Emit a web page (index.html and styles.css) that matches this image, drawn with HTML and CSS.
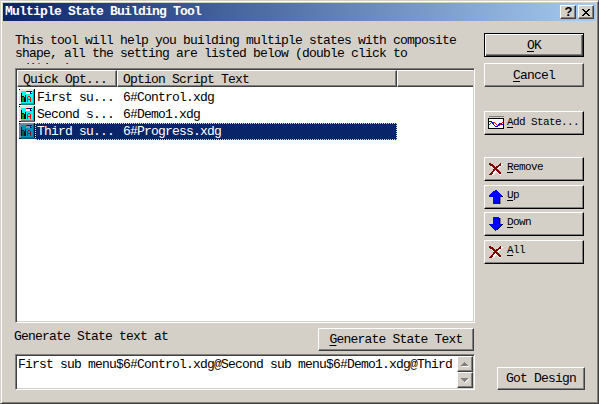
FILE: index.html
```html
<!DOCTYPE html>
<html lang="en">
<head>
  <meta charset="UTF-8">
  <title>Multiple State Building Tool</title>
  <link rel="stylesheet" href="styles.css">
</head>
<body>
  <svg class="defs" width="0" height="0">
    <symbol id="item" viewBox="0 0 16 16">
      <rect width="16" height="16" fill="#e8e4d8"/>
      <path d="M0 0h1v1H0zM0 15h2v1H0zM15 0h1v15h-1z" fill="#000"/>
      <path d="M14 1h1v13h-1zM2 14h13v1H2z" fill="#808080"/>
      <path d="M2 15h14v1H2z" fill="#008080"/>
      <path d="M2 2h12v12H2z" fill="#0ff"/>
      <path d="M2 4h1v9H2zM3 7h2v1H3zM5 8h1v5H5zM6 6h1v7H6z" fill="#000"/>
      <path d="M3 8h2v5H3z" fill="#00a000"/>
      <path d="M7 2h6v3H7z" fill="#fff"/>
      <path d="M8 2h5v1h-1v2h-1V3H8z" fill="#000080"/>
      <path d="M7 2h1v1H7zM12 4h1v1h-1zM9 7h2v1h1v5h-1v-2H9v2H8V8h1zM9 8v2h2V8z" fill="#f00" fill-rule="evenodd"/>
    </symbol>
    <symbol id="cross" viewBox="0 0 16 16">
      <path d="M3 4l10 10M14 3L4 14" fill="none" stroke="#fff" stroke-width="2"/>
      <path d="M1 3l3 1 9 9M13 3L8 7 2 14" fill="none" stroke="#800000" stroke-width="2"/>
    </symbol>
    <symbol id="arrow-up" viewBox="0 0 16 16">
      <path d="M9 2h1v1h1v1h1v1h1v1h1v1h1v1h-3v7H6v-1h5V8h3z" fill="#000"/>
      <path d="M12 8h1v7h-1z" fill="#808080"/>
      <path d="M7 1h2v1h1v1h1v1h1v1h1v1h1v2h-3v7H5V8H1V6h1V5h1V4h1V3h1V2h2z" fill="#00f"/>
    </symbol>
    <symbol id="arrow-down" viewBox="0 0 16 16">
      <path d="M11 2h1v6h3v1h-1v1h-1v1h-1v1h-1v1h-1v1H9v-2h2z" fill="#000"/>
      <path d="M12 2h1v6h-1z" fill="#808080"/>
      <path d="M5 1h6v7h3v1h-1v1h-1v1h-1v1h-1v1H9v1H8v1H7v-1H6v-1H5v-1H4v-1H3v-1H2V9H1V8h4z" fill="#00f"/>
    </symbol>
  </svg>

  <div class="window">
    <div class="titlebar">
      <h1>Multiple State Building Tool</h1>
      <button class="caption-btn help">?</button>
      <button class="caption-btn close">
        <svg width="8" height="7" viewBox="0 0 8 7"><path d="M0 0h2v1h1v1h2V1h1V0h2v1H7v1H6v1H5v1h1v1h1v1h1v1H6V6H5V5H3v1H2v1H0V6h1V5h1V4h1V3H2V2H1V1H0z"/></svg>
      </button>
    </div>

    <div class="content">
      <div class="main">
        <p class="intro">This tool will help you building multiple states with composite<br>shape, all the setting are listed below (double click to <span>editing)</span></p>

        <div class="list">
          <div class="list-header">
            <span>Quick Opt...</span>
            <span>Option Script Text</span>
            <span></span>
          </div>
          <div class="row">
            <svg class="item-icon"><use href="#item"/></svg>
            <div class="cells"><span>First su...</span><span>6#Control.xdg</span></div>
          </div>
          <div class="row">
            <svg class="item-icon"><use href="#item"/></svg>
            <div class="cells"><span>Second s...</span><span>6#Demo1.xdg</span></div>
          </div>
          <div class="row selected">
            <div class="icon-tint"><svg class="item-icon"><use href="#item"/></svg></div>
            <div class="cells"><span>Third su...</span><span>6#Progress.xdg</span></div>
          </div>
        </div>

        <div class="generate">
          <span>Generate State text at</span>
          <button class="btn"><span><u>G</u>enerate State Text</span></button>
        </div>

        <div class="output">
          <div class="output-text">First sub menu$6#Control.xdg@Second sub menu$6#Demo1.xdg@Third</div>
          <div class="scrollbar">
            <button><svg width="8" height="5" viewBox="0 0 8 5"><path d="M1 4h7v1H1z" fill="#fff"/><path d="M3 0h1v1h1v1h1v1h1v1H0V3h1V2h1V1h1z" fill="#808080"/></svg></button>
            <button><svg width="8" height="5" viewBox="0 0 8 5"><path d="M7 1h1v1H7v1H6v1H5v1H4V4h1V3h1V2h1z" fill="#fff"/><path d="M0 0h7v1H6v1H5v1H4v1H3V3H2V2H1V1H0z" fill="#808080"/></svg></button>
          </div>
        </div>
      </div>

      <div class="side">
        <button class="btn default"><span><u>O</u>K</span></button>
        <button class="btn cancel"><span><u>C</u>ancel</span></button>
        <button class="btn tool add">
          <svg width="16" height="14" viewBox="0 0 16 14">
            <path d="M1 0h15v1H1z" fill="#808080"/>
            <path d="M0 2h16v11H0z"/>
            <path d="M1 3h14v9H1z" fill="#fff"/>
            <path d="M1 9l3-3h2l3 3h3l3-3" fill="none" stroke="#f00"/>
            <path d="M1 5h2l4 5h3l2-3 3 2" fill="none" stroke="#00f"/>
          </svg>
          <span><u>A</u>dd State...</span>
        </button>
        <button class="btn tool remove"><svg width="16" height="16"><use href="#cross"/></svg><span><u>R</u>emove</span></button>
        <button class="btn tool up"><svg width="16" height="16"><use href="#arrow-up"/></svg><span><u>U</u>p</span></button>
        <button class="btn tool down"><svg width="16" height="16"><use href="#arrow-down"/></svg><span><u>D</u>own</span></button>
        <button class="btn tool all"><svg width="16" height="16"><use href="#cross"/></svg><span><u>A</u>ll</span></button>
        <button class="btn design"><span>Got Design</span></button>
      </div>
    </div>
  </div>
</body>
</html>
```
FILE: styles.css
```css
* {
  box-sizing: border-box;
}

body {
  margin: 0;
  background: #d4d0c8;
  color: #000;
  font: 13px/13px "Liberation Mono", monospace;
  letter-spacing: -0.8px;
}

svg {
  display: block;
  flex: none;
  shape-rendering: crispEdges;
}

.defs {
  position: absolute;
}

.window {
  width: 599px;
  height: 404px;
  padding: 1px;
  border: 1px solid;
  border-color: #d4d0c8 #404040 #404040 #d4d0c8;
  box-shadow: inset 1px 1px #fff, inset -1px -1px #808080;
  overflow: hidden;
}

.titlebar {
  display: flex;
  align-items: center;
  height: 18px;
  margin: 1px 1px 0;
  padding: 0 2px;
  background: linear-gradient(to right, #0a246a, #a6caf0);
}

.titlebar h1 {
  flex: 1;
  margin: 0;
  color: #fff;
  font-size: 13px;
  line-height: 18px;
  white-space: nowrap;
}

button {
  display: flex;
  align-items: center;
  justify-content: center;
  margin: 0;
  padding: 0;
  background: #d4d0c8;
  color: #000;
  font: inherit;
  letter-spacing: inherit;
  border: 1px solid;
  border-color: #fff #404040 #404040 #fff;
  box-shadow: inset -1px -1px #808080;
  white-space: nowrap;
}

.caption-btn {
  width: 16px;
  height: 14px;
}

.caption-btn.help {
  margin-right: 2px;
  font: bold 13px/12px "Liberation Sans", sans-serif;
}

.content {
  display: flex;
  height: 381px;
}

.main {
  width: 460px;
  margin-left: 13px;
}

.intro {
  height: 30px;
  margin: 13px 0 0;
  overflow: hidden;
  white-space: nowrap;
}

.intro span {
  display: block;
  padding-top: 2px;
}

/* sunken boxes */
.list,
.output {
  border: 1px solid;
  border-color: #808080 #fff #fff #808080;
  box-shadow: inset 1px 1px #404040, inset -1px -1px #d4d0c8;
  background: #fff;
}

.list {
  height: 255px;
  margin-top: 4px;
  padding: 1px;
}

.list-header {
  display: flex;
  height: 17px;
  margin-bottom: 2px;
  line-height: 17px;
}

.list-header span {
  width: 280px;
  padding-left: 5px;
  background: #d4d0c8;
  border: 1px solid;
  border-color: #fff #404040 #404040 #fff;
  box-shadow: inset -1px -1px #808080;
}

.list-header span:first-child {
  width: 100px;
}

.list-header span:last-child {
  width: 76px;
  border-right: 0;
  box-shadow: inset 0 -1px #808080;
}

.row {
  display: flex;
  width: 380px;
  height: 17px;
  padding-left: 2px;
}

.item-icon {
  width: 16px;
  height: 16px;
}

.cells {
  display: flex;
  flex: 1;
  margin-left: 1px;
  padding-left: 1px;
  line-height: 18px;
}

.cells span:first-child {
  width: 86px;
}

.selected .icon-tint {
  width: 16px;
  height: 16px;
  background: #0a246a;
}

.selected .item-icon {
  opacity: 0.5;
}

.selected .cells {
  margin-left: 0;
  padding-left: 1px;
  border: 1px dotted #f5db95;
  background: #0a246a;
  color: #fff;
  line-height: 16px;
}

.generate {
  display: flex;
  justify-content: space-between;
  height: 23px;
  margin: 5px 1px 3px -1px;
  line-height: 17px;
}

.generate .btn {
  width: 156px;
  height: 23px;
}

.output {
  display: flex;
  justify-content: space-between;
  height: 36px;
  padding: 1px;
}

.output-text {
  padding: 2px 0 0 1px;
  white-space: nowrap;
}

.scrollbar button {
  width: 16px;
  height: 16px;
}

.side {
  display: flex;
  flex-direction: column;
  width: 101px;
  margin: 12px 0 0 9px;
}

.side .btn {
  flex: none;
  width: 100px;
  height: 24px;
}

.side .default {
  border-color: #000;
  box-shadow: inset 1px 1px #fff, inset -1px -1px #404040, inset -2px -2px #808080;
}

.side .cancel {
  margin-top: 6px;
}

.side .tool {
  justify-content: flex-start;
  gap: 3px;
  padding-left: 3px;
  border-color: #fff #000 #000 #fff;
  font-size: 11px;
  letter-spacing: -0.6px;
}

.side .tool span {
  position: relative;
  top: -2px;
}

.side .add {
  margin-top: 24px;
}

.side .add span {
  top: -1px;
}

.side .remove {
  margin-top: 22px;
}

.side .up,
.side .all {
  margin-top: 4px;
}

.side .down {
  margin-top: 3px;
}

.side .design {
  width: 88px;
  height: 23px;
  margin: 103px 0 0 13px;
}

u {
  text-underline-offset: 2px;
}
```
